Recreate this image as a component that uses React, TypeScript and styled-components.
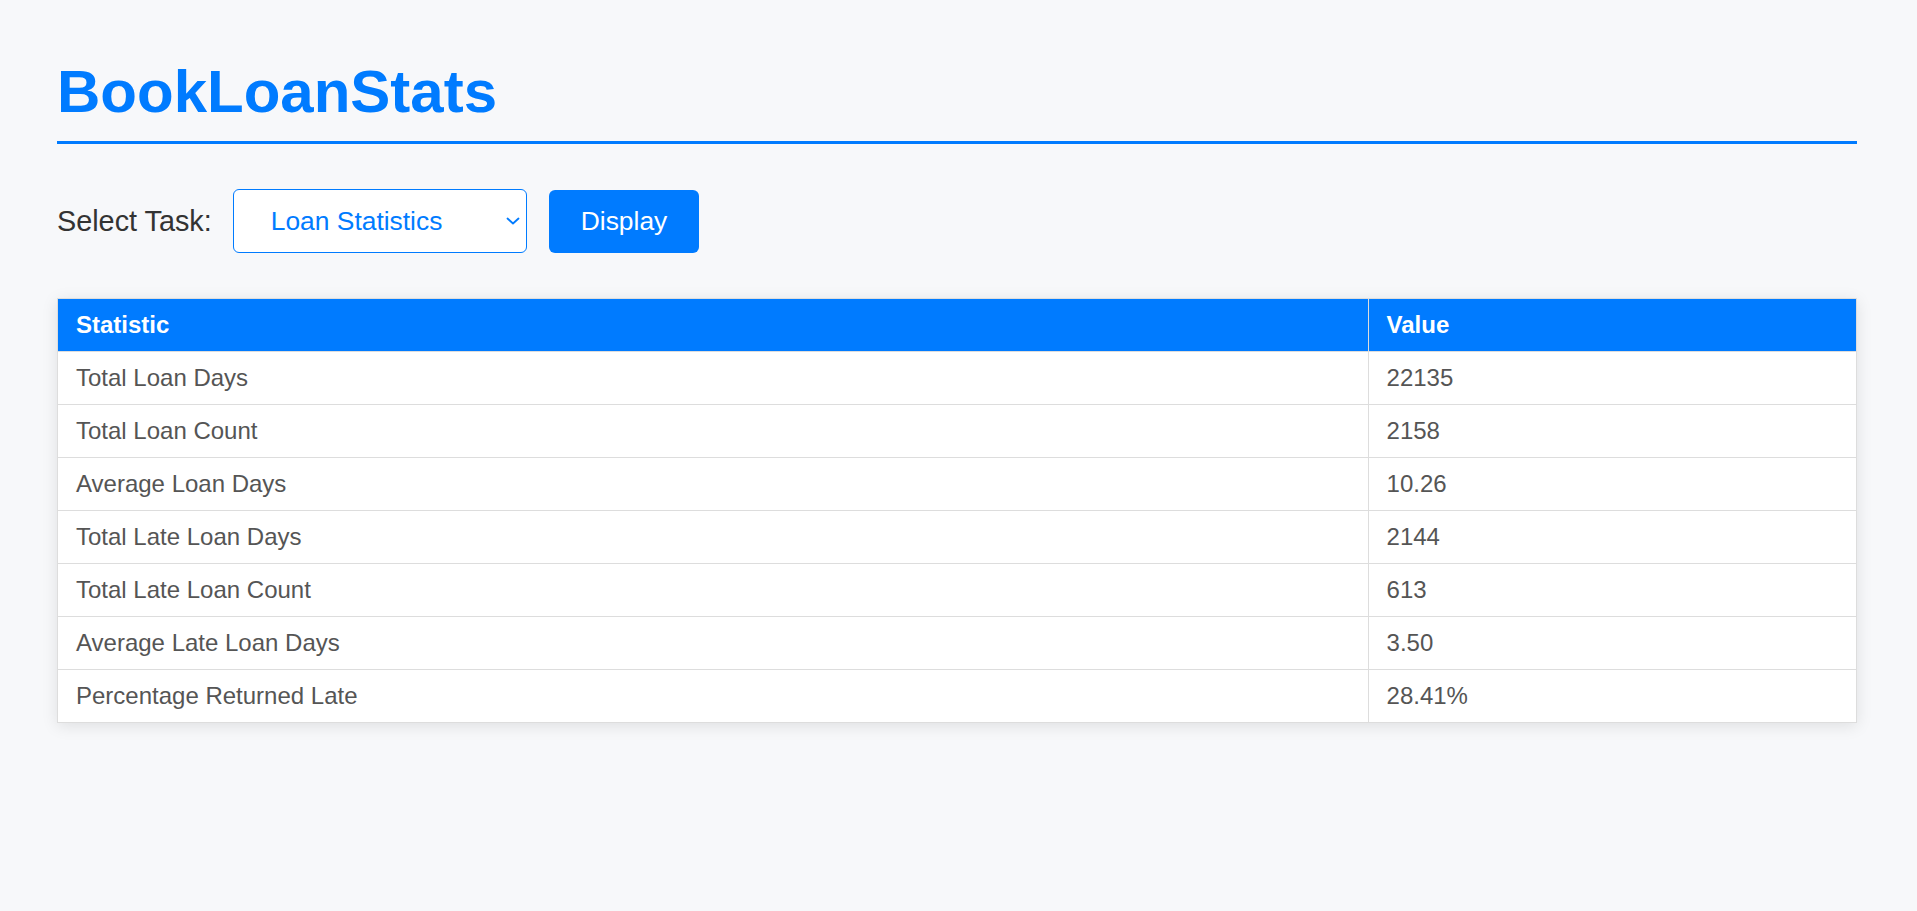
import React from "react";
import styled, { createGlobalStyle } from "styled-components";

const GlobalStyle = createGlobalStyle`
  html, body {
    margin: 0;
    padding: 0;
    background: #f7f8fa;
    font-family: "Liberation Sans", Arial, Helvetica, sans-serif;
    font-size: 24px;
  }
`;

const Page = styled.div`
  padding: 57px 0 60px 57px;
`;

const Container = styled.div`
  width: 1800px;
`;

const Title = styled.h1`
  margin: 0;
  padding-bottom: 15px;
  border-bottom: 3px solid #007bff;
  color: #007bff;
  font-size: 60px;
  font-weight: 700;
  line-height: 1.15;
`;

const Controls = styled.div`
  display: flex;
  align-items: center;
  margin-top: 45px;
  margin-bottom: 45px;
`;

const Label = styled.label`
  font-size: 28.8px;
  color: #333;
  margin-right: 21px;
`;

const SelectWrap = styled.div`
  position: relative;
  margin-right: 22px;
  display: flex;
`;

const Select = styled.select`
  appearance: none;
  -webkit-appearance: none;
  width: 294px;
  height: 64px;
  box-sizing: border-box;
  padding: 0 30px 0 37px;
  font-family: inherit;
  font-size: 26.4px;
  color: #007bff;
  background: #fff;
  border: 1px solid #007bff;
  border-radius: 6px;
  outline: none;
`;

const Chevron = styled.svg`
  position: absolute;
  right: 7px;
  top: 50%;
  width: 14px;
  height: 8px;
  margin-top: -4px;
  pointer-events: none;
`;

const Button = styled.button`
  height: 63px;
  padding: 0 32px;
  font-family: inherit;
  font-size: 26.4px;
  color: #fff;
  background: #007bff;
  border: none;
  border-radius: 6px;
  cursor: pointer;
`;

const Table = styled.table`
  width: 100%;
  border-collapse: collapse;
  background: #fff;
  box-shadow: 0 3px 15px rgba(0, 0, 0, 0.1);
`;

const Th = styled.th<{ $w?: string }>`
  ${(p) => (p.$w ? `width: ${p.$w};` : "")}
  padding: 12px 18px;
  text-align: left;
  background: #007bff;
  color: #fff;
  font-weight: 700;
  font-size: 24px;
  border: 1px solid #ddd;
`;

const Td = styled.td`
  padding: 12px 18px;
  text-align: left;
  color: #555;
  font-size: 24px;
  border: 1px solid #ddd;
`;

const rows: [string, string][] = [
  ["Total Loan Days", "22135"],
  ["Total Loan Count", "2158"],
  ["Average Loan Days", "10.26"],
  ["Total Late Loan Days", "2144"],
  ["Total Late Loan Count", "613"],
  ["Average Late Loan Days", "3.50"],
  ["Percentage Returned Late", "28.41%"],
];

export default function App() {
  return (
    <>
      <GlobalStyle />
      <Page>
        <Container>
          <Title>BookLoanStats</Title>
          <Controls>
            <Label htmlFor="task">Select Task:</Label>
            <SelectWrap>
              <Select id="task" defaultValue="stats">
                <option value="stats">Loan Statistics</option>
                <option value="books">Book List</option>
              </Select>
              <Chevron viewBox="0 0 14 8" fill="none">
                <path
                  d="M1.5 1.5 L7 6.5 L12.5 1.5"
                  stroke="#007bff"
                  strokeWidth="1.8"
                  strokeLinecap="round"
                  strokeLinejoin="round"
                />
              </Chevron>
            </SelectWrap>
            <Button>Display</Button>
          </Controls>
          <Table>
            <thead>
              <tr>
                <Th $w="72.85%">Statistic</Th>
                <Th>Value</Th>
              </tr>
            </thead>
            <tbody>
              {rows.map(([k, v]) => (
                <tr key={k}>
                  <Td>{k}</Td>
                  <Td>{v}</Td>
                </tr>
              ))}
            </tbody>
          </Table>
        </Container>
      </Page>
    </>
  );
}
